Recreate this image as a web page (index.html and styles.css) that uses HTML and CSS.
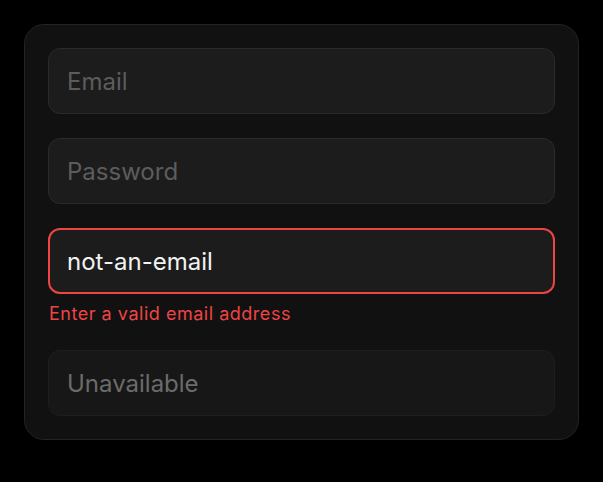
FILE: index.html
```html
<!DOCTYPE html>
<html lang="en">
<head>
<meta charset="utf-8">
<title>Form fields</title>
<link rel="stylesheet" href="styles.css">
</head>
<body>
<main class="stage">
  <form class="card">
    <div class="field">
      <input class="input" type="email" placeholder="Email">
    </div>
    <div class="field">
      <input class="input" type="password" placeholder="Password">
    </div>
    <div class="field">
      <input class="input input--error" type="text" value="not-an-email">
      <p class="error-text">Enter a valid email address</p>
    </div>
    <div class="field">
      <input class="input input--disabled" type="text" placeholder="Unavailable" disabled>
    </div>
  </form>
</main>
</body>
</html>
```
FILE: styles.css
```css
* { box-sizing: border-box; }
html, body {
  margin: 0;
  background: #000;
  font-family: Inter, "Noto Sans", sans-serif;
}
.stage {
  padding: 24px;
}
.card {
  width: 555px;
  background: #111111;
  border: 1px solid #232323;
  border-radius: 20px;
  padding: 23px;
  display: flex;
  flex-direction: column;
  gap: 24px;
}
.field {
  display: flex;
  flex-direction: column;
}
.input {
  width: 100%;
  height: 66px;
  padding: 0 18px;
  background: #1c1c1c;
  border: 1px solid #2a2a2a;
  border-radius: 12px;
  color: #f2f2f2;
  font-family: inherit;
  font-size: 24px;
  outline: none;
}
.input::placeholder { color: #5c5c5c; }
.input--error {
  border: 2px solid #ef4444;
  padding: 0 17px;
}
.input--disabled {
  background: #171717;
  border-color: #1e1e1e;
}
.input--disabled::placeholder { color: #6b6b6b; }
.error-text {
  margin: 7px 0 0 1px;
  color: #ef4444;
  font-size: 18px;
  line-height: 25px;
  letter-spacing: 0.52px;
}
```
